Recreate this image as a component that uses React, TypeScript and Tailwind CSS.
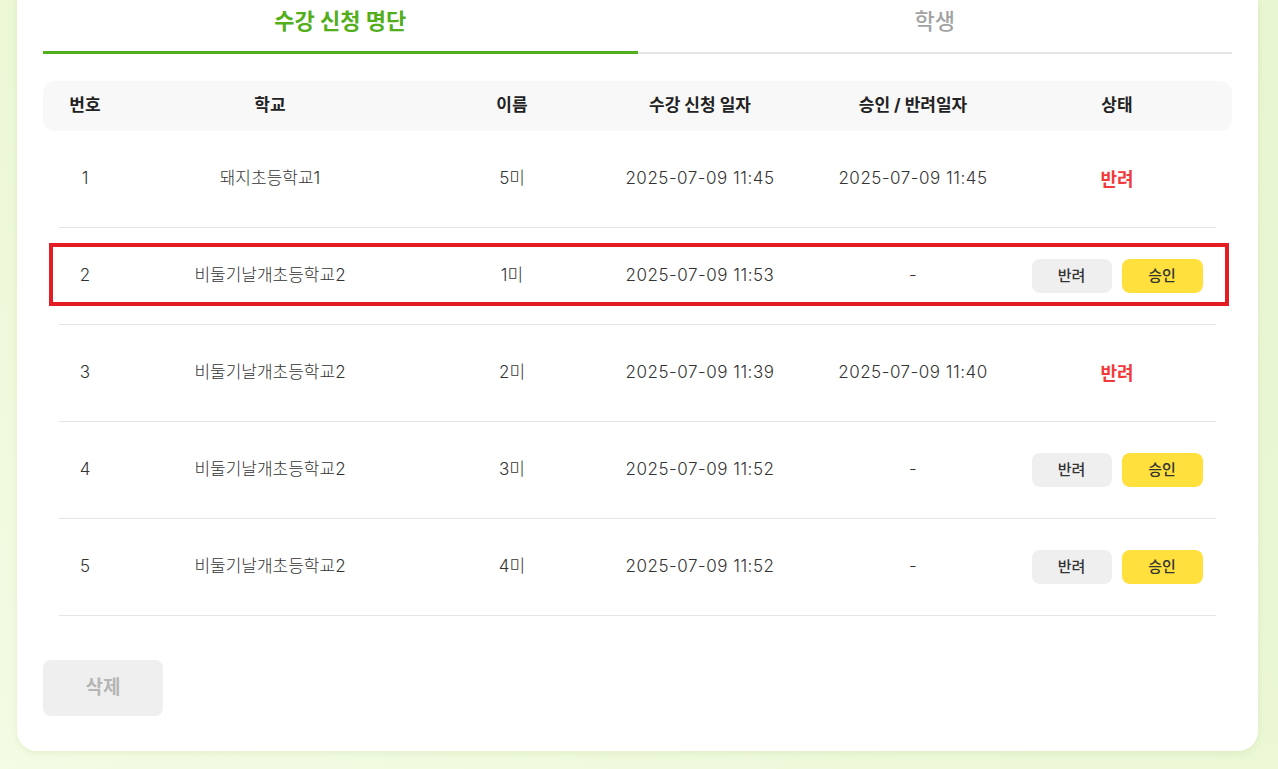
import React from 'react';

type Row = {
  no: number;
  school: string;
  name: string;
  appliedAt: string;
  decidedAt: string;
  status: 'rejected' | 'pending';
  highlight?: boolean;
};

const rows: Row[] = [
  { no: 1, school: '돼지초등학교1', name: '5미', appliedAt: '2025-07-09 11:45', decidedAt: '2025-07-09 11:45', status: 'rejected' },
  { no: 2, school: '비둘기날개초등학교2', name: '1미', appliedAt: '2025-07-09 11:53', decidedAt: '-', status: 'pending', highlight: true },
  { no: 3, school: '비둘기날개초등학교2', name: '2미', appliedAt: '2025-07-09 11:39', decidedAt: '2025-07-09 11:40', status: 'rejected' },
  { no: 4, school: '비둘기날개초등학교2', name: '3미', appliedAt: '2025-07-09 11:52', decidedAt: '-', status: 'pending' },
  { no: 5, school: '비둘기날개초등학교2', name: '4미', appliedAt: '2025-07-09 11:52', decidedAt: '-', status: 'pending' },
];

const cols = 'grid grid-cols-[84px_286px_198px_178px_248px_160px_1fr] items-center text-center';

const App = () => {
  return (
    <div
      className="min-h-[769px] bg-gradient-to-tr from-[#f3fce4] via-[#ebf7d5] to-[#e9f6d2] pl-[17px] pr-[20px] pb-[18px]"
      style={{ fontFamily: 'Inter, "Noto Sans CJK KR", sans-serif' }}
    >
      <div className="rounded-b-[20px] bg-white px-[26px] pb-[35px] shadow-[0_2px_6px_rgba(120,160,60,0.12)]">
        <div className="flex items-end">
          <button className="flex-1 border-b-[3px] border-[#52ae1b] pt-[6px] pb-[15px] text-[22px] font-bold leading-[30px] text-[#52ae1b]">
            수강 신청 명단
          </button>
          <button className="flex-1 border-b-2 border-[#e5e5e5] pt-[6px] pb-[16px] text-[22px] font-medium leading-[30px] text-[#a3a3a3]">
            학생
          </button>
        </div>

        <div className={`${cols} mt-[27px] h-[50px] rounded-xl bg-[#f8f8f8] text-[17px] font-bold text-[#222]`}>
          <div>번호</div>
          <div>학교</div>
          <div>이름</div>
          <div>수강 신청 일자</div>
          <div>승인 / 반려일자</div>
          <div>상태</div>
          <div />
        </div>

        {rows.map((row) => (
          <div key={row.no}>
            <div className={`${cols} relative h-[96px] text-[17px] font-light text-[#333]`}>
              <div>{row.no}</div>
              <div>{row.school}</div>
              <div>{row.name}</div>
              <div className="tracking-[0.03em]">{row.appliedAt}</div>
              <div className="tracking-[0.03em]">{row.decidedAt}</div>
              <div className="flex justify-center gap-[10px]">
                {row.status === 'rejected' ? (
                  <span className="text-[18px] font-bold text-[#f23a3a]">반려</span>
                ) : (
                  <>
                    <button className="h-[34px] w-[80px] shrink-0 rounded-lg bg-[#efefef] text-[15px] font-medium text-[#333]">반려</button>
                    <button className="h-[34px] w-[81px] shrink-0 rounded-lg bg-[#ffe03d] text-[15px] font-medium text-[#333]">승인</button>
                  </>
                )}
              </div>
              <div />
              {row.highlight ? (
                <div className="pointer-events-none absolute left-[6px] right-[3px] top-[15px] bottom-[18px] border-4 border-[#e41c24]" />
              ) : null}
            </div>
            <div className="mx-4 h-px bg-[#e5e5e5]" />
          </div>
        ))}

        <button className="mt-[44px] h-[56px] w-[120px] rounded-lg bg-[#efefef] text-[19px] font-bold text-[#b5b5b5]">삭제</button>
      </div>
    </div>
  );
};

export default App;
